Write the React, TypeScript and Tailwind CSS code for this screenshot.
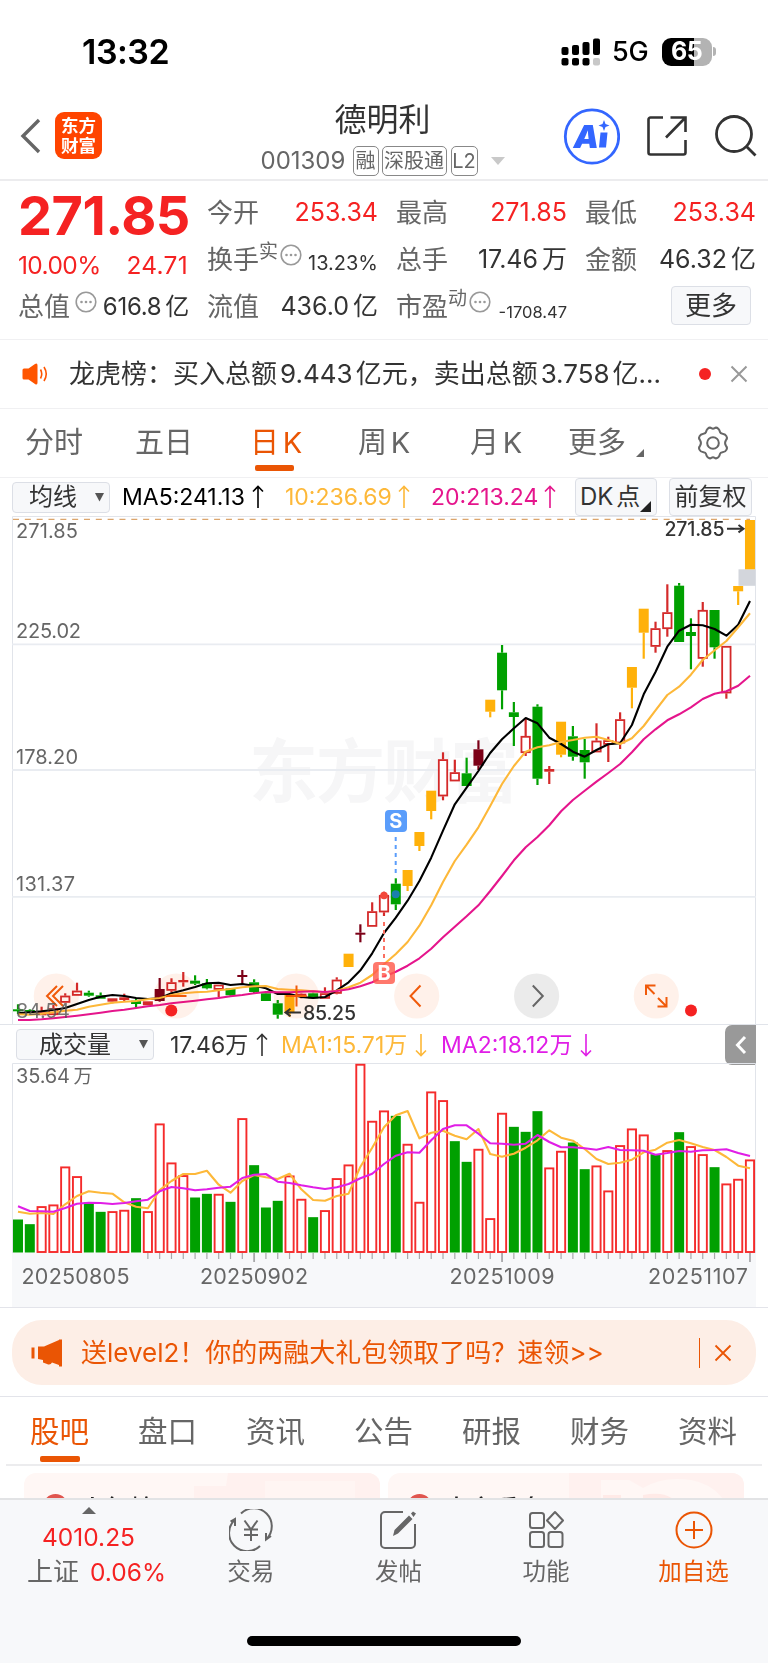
import type { ReactNode } from 'react';
import { clsx } from 'clsx';

type Kind = 'g' | 'r' | 'y' | 'd';

// kind, high, body top, body bottom, low
const CANDLES: [Kind, number, number, number, number][] = [
  ['g', 1004.3, 1009.3, 1011, 1014], ['g', 1009.3, 1010, 1011.7, 1012.7],
  ['r', 1006.7, 1012.3, 1015.3, 1015.3], ['r', 1005, 1008.3, 1015, 1015],
  ['r', 993.3, 995.7, 1002.7, 1002.7], ['r', 982.7, 990.7, 995.7, 995.7],
  ['g', 990.7, 992.7, 995.7, 996.7], ['g', 992.5, 995.3, 998.7, 998.7],
  ['r', 998.3, 998.3, 1001.7, 1003.3], ['r', 993.7, 997.3, 1000, 1001.7],
  ['g', 998.3, 1000.7, 1004, 1008.3], ['r', 1001.3, 1001.3, 1005.3, 1005.3],
  ['d', 978, 989, 1001, 1001.7], ['r', 978.3, 982.3, 990.7, 992.3],
  ['r', 972, 980, 982.3, 986.7], ['g', 975.3, 980.7, 983.7, 985],
  ['g', 979, 983.3, 988.3, 989.3], ['r', 984.7, 984.7, 989.7, 997.3],
  ['g', 988, 988.3, 995.3, 996], ['d', 970, 975, 976, 984.3],
  ['g', 979.3, 982.3, 992, 994], ['g', 992, 993.3, 1001, 1001],
  ['g', 1000, 1003.3, 1014.7, 1018.7], ['y', 995, 995, 1012.3, 1016.7],
  ['r', 993.3, 993.7, 996.7, 998.3], ['g', 992.7, 993.3, 998.3, 998.3],
  ['r', 987.3, 993.3, 998.7, 998.7], ['r', 977.3, 979.7, 993.7, 994.3],
  ['y', 953.7, 953.7, 967, 967], ['d', 924.3, 932.7, 933.7, 942.3],
  ['r', 902.3, 911.3, 926.7, 926.7], ['r', 891.7, 895, 912.3, 916],
  ['g', 878.3, 883.7, 904.3, 910], ['y', 870, 870, 886, 891],
  ['y', 832, 832, 846, 851], ['y', 790.7, 790.7, 811, 819.3],
  ['r', 752.3, 759.3, 796.3, 800.3], ['r', 759.7, 772.3, 781.3, 781.3],
  ['g', 757.7, 773.3, 786, 786], ['d', 740.3, 749.3, 765.7, 770],
  ['y', 699.7, 699.7, 711.7, 717.3], ['g', 645, 652.7, 690.3, 709.3],
  ['g', 702, 712.3, 717, 746], ['r', 718.7, 736, 753, 756],
  ['g', 704.3, 706.7, 778.7, 785], ['r', 766, 769, 771.7, 784],
  ['y', 721.7, 721.7, 754.7, 757.3], ['g', 726, 736.3, 756.7, 760.7],
  ['g', 739, 750, 762.3, 778.7], ['r', 723.3, 740.7, 752.3, 752.3],
  ['r', 736.7, 740.3, 744.7, 762], ['r', 712.3, 719.3, 743.3, 749],
  ['y', 667, 667, 687.7, 708.3], ['y', 608.7, 608.7, 632.7, 658.7],
  ['r', 621.7, 628.3, 646.7, 652.7], ['r', 584.3, 612.3, 629, 636.7],
  ['g', 583, 585.7, 642, 642], ['g', 618.3, 632, 636, 669.3],
  ['r', 602, 610, 658.7, 666.7], ['g', 610, 610, 647.3, 658.7],
  ['r', 646, 646, 693.3, 698.7], ['y', 586, 586, 591.3, 605],
  ['y', 520, 520, 569.3, 569.3],
];

const MA5 = [
  1013.3, 1012.3, 1011.3, 1010, 1008, 1004, 1000, 996.7, 995, 996, 998, 999, 998.3, 993.3, 990.3, 987, 983.3,
  982.7, 985, 984, 985.7, 988.3, 994, 994, 997, 998, 997, 990.3, 982.3, 970.3, 953.3, 933, 917.7, 900.7, 881,
  857.7, 830.7, 804.3, 787.7, 771, 753, 739.3, 728.3, 718, 723.3, 737.7, 744, 751.7, 756.7, 750, 744.3, 743.3,
  725, 694.3, 672, 646.7, 630.7, 624.7, 625.3, 629, 635.7, 624.7, 601,
];

const MA10 = [
  1014.3, 1014.7, 1013.7, 1012.3, 1010.7, 1009.7, 1006.7, 1004.7, 1002.7, 1001.7, 1001, 999.3, 998, 995, 993.3,
  992.3, 991.7, 990.3, 989, 987.3, 986.3, 986, 989, 989.7, 990.3, 991.3, 992.3, 990.7, 987.3, 982.7, 975, 964.3,
  954, 942, 925.7, 905.3, 882, 861, 844.7, 827.3, 806, 784, 766, 751.7, 747.3, 745.3, 742, 740, 737.7, 736.7,
  740, 744, 738.3, 726, 710.3, 695, 686.7, 674.7, 660, 650.3, 641, 627.3, 613.3,
];

const MA20 = [
  1020, 1020, 1019.3, 1018.3, 1017, 1015.7, 1014.3, 1012.7, 1011, 1009.7, 1008, 1006.3, 1005, 1003.3, 1002,
  1000.7, 999.3, 998, 996.3, 995, 993.3, 992, 992.3, 992.3, 991.7, 991.3, 992, 991, 989.3, 986.3, 982.3, 976.7,
  971.7, 965.7, 958.3, 948.7, 937.3, 926.7, 916.3, 905.3, 891, 876, 860.3, 847.3, 837, 825.3, 811.3, 800,
  790.7, 781.7, 773, 764, 752.3, 739.3, 729.3, 720.3, 714.3, 707.3, 699, 693.7, 691.3, 685.7, 675.7,
];

// bar tops, in thirds of a pixel below y = 1050
const VOLUMES = [
  510, 524, 470, 465, 351, 380, 459, 487, 485, 481, 446, 485, 222, 339, 377, 444, 433, 433, 457, 206, 347, 474,
  454, 378, 448, 503, 482, 386, 345, 43, 214, 183, 199, 283, 457, 126, 152, 275, 337, 298, 506, 190, 232, 247,
  185, 354, 304, 279, 359, 348, 423, 287, 237, 255, 314, 302, 248, 290, 314, 353, 402, 388, 330,
];

const FALLING = new Set([0, 1, 6, 7, 10, 15, 16, 18, 20, 21, 22, 25, 32, 37, 38, 42, 43, 44, 47, 48, 54, 56, 59]);

const VMA1 = [
  485, 491, 489, 492, 463, 438, 424, 428, 431, 457, 470, 475, 420, 393, 372, 372, 362, 404, 428, 393, 375, 382,
  387, 371, 418, 450, 452, 438, 431, 350, 293, 232, 196, 183, 265, 248, 242, 257, 268, 237, 312, 320, 311, 293,
  271, 241, 263, 272, 297, 327, 342, 338, 329, 307, 299, 278, 270, 280, 291, 300, 321, 347, 355,
];

const VMA2 = [
  469, 483, 484, 485, 474, 461, 458, 459, 462, 459, 454, 449, 424, 411, 415, 421, 418, 413, 410, 384, 374, 372,
  395, 399, 406, 412, 417, 412, 402, 385, 371, 342, 317, 307, 308, 271, 237, 226, 226, 251, 280, 281, 284, 281,
  255, 276, 292, 292, 295, 299, 291, 300, 301, 302, 314, 309, 303, 305, 301, 300, 298, 309, 318,
];

const COLORS: Record<Kind, string> = { g: '#00a000', r: '#d42a2a', y: '#ffb10a', d: '#7c0017' };

const xAt = (i: number) => 18 + i * 11.806;
const vy = (v: number) => 1050 + v / 3;
const line = (ys: number[]) => ys.map((y, i) => `${xAt(i).toFixed(1)},${y.toFixed(1)}`).join(' ');

function Candle({ i, kind, hi, top, bottom, lo }: { i: number; kind: Kind; hi: number; top: number; bottom: number; lo: number }) {
  const x = xAt(i);
  const color = COLORS[kind];
  const hollow = kind === 'r' && bottom - top > 4;
  return (
    <g>
      {hi < top && <line x1={x} x2={x} y1={hi} y2={top} stroke={color} strokeWidth={2.2} />}
      {lo > bottom && <line x1={x} x2={x} y1={bottom} y2={lo} stroke={color} strokeWidth={2.2} />}
      {hollow ? (
        <rect x={x - 4.2} y={top + 0.8} width={8.4} height={bottom - top - 1.6} fill="#fff" stroke={color} strokeWidth={1.8} />
      ) : (
        <rect x={x - 5} y={top} width={10} height={Math.max(bottom - top, 2)} fill={color} />
      )}
    </g>
  );
}

function PriceChart() {
  return (
    <svg width="768" height="508" viewBox="0 516 768 508" className="block" fontFamily='Inter, "Noto Sans CJK SC", sans-serif'>
      <text x="249" y="797" fontSize="69" fontWeight="700" fill="#f6f6f7" textLength="270">
        东方财富
      </text>
      <path d="M12.5 1024V516.5H755.5V1024" fill="none" stroke="#e1e4ea" />
      {[644.3, 770, 896.8].map((y) => (
        <line key={y} x1="12" x2="756" y1={y} y2={y} stroke="#e9ecf1" strokeWidth="1.8" />
      ))}
      <line x1="13" x2="750" y1="519.4" y2="519.4" stroke="#dba56c" strokeWidth="1.4" strokeDasharray="6 5.83" />
      <g fontSize="20" fill="#666">
        <text x="16" y="538" textLength="62">271.85</text>
        <text x="16" y="637.5" textLength="65">225.02</text>
        <text x="16" y="764.3" textLength="62">178.20</text>
        <text x="16" y="891" textLength="59">131.37</text>
      </g>
      <rect x="738.5" y="569.3" width="17" height="16.5" fill="#d3d6dc" />
      {CANDLES.map(([kind, hi, top, bottom, lo], i) => (
        <Candle key={i} i={i} kind={kind} hi={hi} top={top} bottom={bottom} lo={lo} />
      ))}
      <g fill="none" strokeWidth="2.1" strokeLinejoin="round">
        <polyline points={line(MA5)} stroke="#000" />
        <polyline points={line(MA10)} stroke="#fdb839" />
        <polyline points={line(MA20)} stroke="#e5158c" />
      </g>

      <line x1="395.7" x2="395.7" y1="837" y2="873" stroke="#5a9dfb" strokeWidth="2" strokeDasharray="4 4" />
      <rect x="385" y="810" width="22" height="22" rx="4" fill="#5a9dfb" />
      <text x="395.9" y="828" fontSize="20" fontWeight="700" fill="#fff" textAnchor="middle">S</text>
      <circle cx="395.7" cy="894.3" r="4" fill="#1a7fae" />
      <line x1="384" x2="384" y1="922" y2="959" stroke="#fa6f61" strokeWidth="2" strokeDasharray="4 4" />
      <circle cx="384" cy="895.5" r="3.8" fill="#f3483b" />
      <rect x="373" y="962" width="22" height="22" rx="4" fill="#ff5a4c" fillOpacity="0.82" />
      <text x="384" y="980" fontSize="20" fontWeight="700" fill="#fff" textAnchor="middle">B</text>

      <g fontSize="19.5" fontWeight="500" fill="#333">
        <text x="664.5" y="536" textLength="60">271.85</text>
        <text x="303" y="1020" textLength="53">85.25</text>
      </g>
      <path d="M727 528.7H743M738.5 525l5 3.7-5 3.7" fill="none" stroke="#333" strokeWidth="2" />
      <path d="M301 1012.5H285M290.5 1008.8l-5 3.7 5 3.7" fill="none" stroke="#333" strokeWidth="2" />

      {[56.3, 176.3, 296.3, 416.7, 656.3].map((x) => (
        <circle key={x} cx={x} cy="996" r="22.6" fill="#fff1ea" className="mix-blend-multiply" />
      ))}
      <circle cx="536.6" cy="996" r="22.6" fill="#ebebeb" />
      <g fill="none" stroke="#f05a0a" strokeWidth="2">
        <path d="M57 986l-10 10 10 10M63 986l-10 10 10 10" />
        <path d="M166 996h20.5M286 996h20.5M296.5 985.5v21" />
        <path d="M420.5 985.5l-10 10.5 10 10.5" />
        <path d="M646 995v-9.5h9.5M646 985.5l8.5 8.5M666.5 997v9.5h-9M666.5 1006.5l-8.5-8.5" />
      </g>
      <path d="M532.8 985.5l10 10.5-10 10.5" fill="none" stroke="#666" strokeWidth="2" />
      <circle cx="171.3" cy="1010.5" r="6" fill="#f52222" />
      <circle cx="691" cy="1010.5" r="6" fill="#f52222" />
      <text x="16" y="1018" fontSize="20" fill="#555" fillOpacity="0.8" textLength="54">84.54</text>
    </svg>
  );
}

function VolumeChart() {
  return (
    <svg width="768" height="244" viewBox="0 1063 768 244" className="block" fontFamily='Inter, "Noto Sans CJK SC", sans-serif'>
      <rect x="12" y="1253" width="744" height="54" fill="#f7f8fa" />
      <path d="M12.5 1253V1063.5H755.5V1253" fill="none" stroke="#e1e4ea" />
      <text x="16" y="1083" fontSize="20" fill="#666">
        <tspan textLength="54">35.64</tspan>
        <tspan x="73.5" fontSize="19">万</tspan>
      </text>
      {VOLUMES.map((v, i) => {
        const x = xAt(i);
        const y = vy(v);
        if (FALLING.has(i)) {
          return <rect key={i} x={x - 5} y={y - 0.5} width={10} height={1253 - y} fill="#00a000" />;
        }
        return <rect key={i} x={x - 4.1} y={y + 0.4} width={8.2} height={1251.6 - y} fill="#fff" stroke="#f52b2b" strokeWidth={1.9} />;
      })}
      {VOLUMES.map((_, i) => {
        if (i < 11) return null;
        const major = i === 20 || i === 41 || i === 62;
        return (
          <line key={i} x1={xAt(i)} x2={xAt(i)} y1="1253" y2={major ? 1262 : 1259} stroke="#a8a8aa" strokeWidth={major ? 1.8 : 1.2} />
        );
      })}
      <g fill="none" strokeWidth="2.1" strokeLinejoin="round">
        <polyline points={line(VMA1.map(vy))} stroke="#fdb839" />
        <polyline points={line(VMA2.map(vy))} stroke="#e01ee6" />
      </g>
      <g fontSize="21.5" fill="#666">
        <text x="21.5" y="1284" textLength="108">20250805</text>
        <text x="200" y="1284" textLength="108">20250902</text>
        <text x="449.5" y="1284" textLength="105">20251009</text>
        <text x="648" y="1284" textLength="100">20251107</text>
      </g>
    </svg>
  );
}

function StatusBar() {
  return (
    <div className="flex h-[96px] items-center justify-between pt-[7px] pr-[52px] pl-[82px]">
      <span className="text-[34px] leading-none font-semibold tracking-[-0.5px] text-black">13:32</span>
      <div className="flex items-center">
        <svg width="40" height="28" viewBox="0 0 40 28">
          <g fill="#000">
            <rect x="0.5" y="9" width="7" height="8" rx="2" />
            <rect x="11" y="7" width="7" height="10" rx="2" />
            <rect x="21.5" y="4" width="7" height="13" rx="2" />
            <rect x="32" y="0.5" width="7" height="16.5" rx="2" />
            <rect x="0.5" y="20" width="7" height="7.5" rx="2" />
            <rect x="11" y="20" width="7" height="7.5" rx="2" />
            <rect x="21.5" y="20" width="7" height="7.5" rx="2" />
          </g>
          <rect x="32" y="20" width="7" height="7.5" rx="2" fill="#c8c8c8" />
        </svg>
        <span className="ml-[11.5px] w-[49.5px] text-[27px] leading-none font-medium tracking-[-0.3px] text-black">5G</span>
        <span className="flex h-[28px] w-[50px] items-center justify-center rounded-[9px] bg-linear-to-r from-black from-65% to-[#b3b3b3] to-65% text-[25px] leading-none font-bold tracking-[-0.5px] text-white">
          65
        </span>
        <span className="ml-[1.5px] h-[9px] w-[3px] rounded-r-full bg-[#b3b3b3]" />
      </div>
    </div>
  );
}

function Tag({ children, className }: { children: ReactNode; className?: string }) {
  return (
    <span className={clsx('flex h-[30px] items-center justify-center rounded-[5px] border-[1.5px] border-[#888] text-[20px] leading-none whitespace-nowrap text-[#666]', className)}>
      {children}
    </span>
  );
}

function Header() {
  return (
    <header className="flex h-[85px] justify-between border-b-2 border-[#ececee] pr-[10px] pl-[20px]">
      <div className="flex w-[182px] items-start pt-[16px]">
        <svg width="22" height="48" viewBox="0 0 22 48" className="mr-[13px]">
          <path d="M19 8L3 24l16 16" fill="none" stroke="#666" strokeWidth="3.4" />
        </svg>
        <div className="flex h-[47px] w-[47px] flex-col items-center justify-center rounded-[9px] bg-[#ff4400] text-[17.5px] leading-[20px] font-bold text-white">
          <span>东方</span>
          <span>财富</span>
        </div>
      </div>
      <div className="flex flex-col items-center pt-[6px]">
        <h1 className="text-[32px] leading-[36px] font-normal text-[#333]">德明利</h1>
        <div className="mt-[8px] flex items-center text-[#666]">
          <span className="mr-[5px] w-[87px] text-[24px] leading-none">001309</span>
          <Tag className="mr-[3px] w-[26px]">融</Tag>
          <Tag className="mr-[4px] w-[65px]">深股通</Tag>
          <Tag className="w-[27px]">L2</Tag>
          <svg width="14" height="8" viewBox="0 0 14 8" className="ml-[13px]">
            <path d="M0 0h14L7 8z" fill="#c9c9c9" />
          </svg>
        </div>
      </div>
      <div className="flex items-start pt-[12px]">
        <svg width="57" height="57" viewBox="0 0 57 57">
          <circle cx="29" cy="28.5" r="26.7" fill="#fff" stroke="#3366ff" strokeWidth="2.8" />
          <text x="10.5" y="40" fontFamily="Inter" fontSize="32" fontWeight="900" fontStyle="italic" fill="#3366ff">A</text>
          <path d="M37.5 24.5h7l-1.5 15h-7z" fill="#3366ff" />
          <path d="M41 12l1.5 4 4 1.5-4 1.5-1.5 4-1.5-4-4-1.5 4-1.5z" fill="#3366ff" />
        </svg>
        <svg width="42" height="42" viewBox="0 0 42 42" className="mt-[7px] ml-[26px]">
          <path d="M17 2.5H4.5a2 2 0 0 0-2 2v33a2 2 0 0 0 2 2h33a2 2 0 0 0 2-2V25" fill="none" stroke="#333" strokeWidth="2.6" />
          <path d="M24.5 2.5h15V17M39 3L20 22.5" fill="none" stroke="#333" strokeWidth="2.6" />
        </svg>
        <svg width="44" height="44" viewBox="0 0 44 44" className="mt-[6px] ml-[26px]">
          <circle cx="20" cy="20" r="17.5" fill="none" stroke="#333" strokeWidth="2.8" />
          <path d="M32 32l9.5 9.5" stroke="#333" strokeWidth="2.8" />
        </svg>
      </div>
    </header>
  );
}

function MoreDots() {
  return (
    <svg width="22" height="22" viewBox="0 0 22 22" className="shrink-0">
      <circle cx="11" cy="11" r="9.8" fill="none" stroke="#999" strokeWidth="1.6" />
      <g fill="#999">
        <circle cx="6.5" cy="11" r="1.3" />
        <circle cx="11" cy="11" r="1.3" />
        <circle cx="15.5" cy="11" r="1.3" />
      </g>
    </svg>
  );
}

type CellProps = { label: string; sup?: string; dots?: boolean; value: string; unit?: string; red?: boolean; small?: string };

function Cell({ label, sup, dots, value, unit, red, small }: CellProps) {
  return (
    <div className="flex h-[47px] items-center whitespace-nowrap">
      <span className="-ml-px text-[26px] leading-none text-[#666]">{label}</span>
      {sup && <span className="-mt-[16px] text-[19px] leading-none text-[#666]">{sup}</span>}
      {dots && <span className={clsx('-mt-[10px]', sup ? 'ml-[2px]' : 'ml-[5px]')}><MoreDots /></span>}
      <span className={clsx('-mr-px ml-auto leading-none', small ?? 'text-[25px]', red ? 'text-[#f52222]' : 'text-[#333]')}>
        {value}
        {unit && <span className="ml-[4px]">{unit}</span>}
      </span>
    </div>
  );
}

function Quote() {
  return (
    <section className="grid h-[159px] grid-cols-4 gap-x-[20px] border-b border-[#f0f0f2] pt-[8px] pr-[13px] pl-[19px]">
      <div>
        <div className="-ml-px h-[56px] text-[54px] leading-[54px] font-bold tracking-[-0.5px] text-[#f52222]">271.85</div>
        <div className="flex h-[38px] items-center justify-between pt-[2px] text-[24.5px] leading-none text-[#f52222]">
          <span className="-ml-px tracking-[-0.6px]">10.00%</span>
          <span className="tracking-[0.3px]">24.71</span>
        </div>
        <Cell label="总值" dots value="616.8" unit="亿" small="text-[24px] tracking-[-0.3px]" />
      </div>
      <div>
        <Cell label="今开" value="253.34" red />
        <Cell label="换手" sup="实" dots value="13.23%" small="text-[20px] pt-[6px]" />
        <Cell label="流值" value="436.0" unit="亿" />
      </div>
      <div>
        <Cell label="最高" value="271.85" red />
        <Cell label="总手" value="17.46" unit="万" />
        <Cell label="市盈" sup="动" dots value="-1708.47" small="text-[16.5px] pt-[12px]" />
      </div>
      <div>
        <Cell label="最低" value="253.34" red />
        <Cell label="金额" value="46.32" unit="亿" />
        <button className="mt-[3px] mr-[4px] ml-auto flex h-[39px] w-[80px] items-center justify-center rounded-[4px] border border-[#dcdfe6] bg-[#f7f8fa] text-[26px] leading-none text-[#333]">
          更多
        </button>
      </div>
    </section>
  );
}

function News() {
  return (
    <section className="flex h-[69px] items-center border-b border-[#f0f0f2] pl-[22px]">
      <svg width="26" height="22" viewBox="0 0 26 22">
        <path d="M0.5 7q0-1.5 1.5-1.5h4.5L13 1q2.5-1.5 2.5 1.5v17q0 3-2.5 1.5l-6.5-4.5H2Q0.5 16.5 0.5 15z" fill="#ff5500" />
        <path d="M18.5 6.5q2.5 4.5 0 9M22 4q4.5 7 0 14" fill="none" stroke="#ff5500" strokeWidth="1.6" />
      </svg>
      <p className="ml-[21px] w-[600px] text-[26px] leading-none whitespace-nowrap text-[#333]">
        龙虎榜：买入总额<span className="mx-[3px]">9.443</span>亿元，卖出总额
        <span className="mx-[3px]">3.758</span>亿...
      </p>
      <span className="ml-[30px] h-[12px] w-[12px] rounded-full bg-[#f52222]" />
      <svg width="18" height="18" viewBox="0 0 18 18" className="ml-[19px]">
        <path d="M1.5 1.5l15 15M16.5 1.5l-15 15" stroke="#999" strokeWidth="2" />
      </svg>
    </section>
  );
}

const PERIODS = [
  { label: '分时', width: 'w-[57px]' },
  { label: '五日', width: 'ml-[53px] w-[57px]' },
  { label: '日 K', width: 'ml-[58px] w-[50px]', active: true },
  { label: '周 K', width: 'ml-[58px] w-[53px]' },
  { label: '月 K', width: 'ml-[59px] w-[53px]' },
  { label: '更多', width: 'ml-[45px] w-[60px]' },
];

function PeriodTabs() {
  return (
    <nav className="flex h-[69px] items-center border-b border-[#f0f0f2] pl-[25px]">
      {PERIODS.map((p) => (
        <span
          key={p.label}
          className={clsx('relative flex h-full items-center pb-px text-[29px] leading-none whitespace-nowrap [word-spacing:-4.5px]', p.width, p.active ? 'text-[#ea5504]' : 'text-[#666]')}
        >
          {p.label}
          {p.active && <span className="absolute bottom-[6px] left-[5px] h-[6px] w-[39px] rounded-[2px] bg-[#ea5504]" />}
        </span>
      ))}
      <svg width="8" height="8" viewBox="0 0 8 8" className="mt-[20px] ml-[8px]">
        <path d="M8 0v8H0z" fill="#666" />
      </svg>
      <svg width="36" height="36" viewBox="0 0 34 34" className="-mt-px ml-[51px]" fill="none" stroke="#666" strokeWidth="1.9">
        <path d="M12 3.5q2-1.8 3.5-.5 1.5 1 3 0 1.5-1.3 3.5.5 1.5 1.5 1.5 3 .5 1.5 2.5 1.7 2.8.3 3.8 2.5 1 2-.5 3.5-1.8 2.8 0 5.6 1.5 1.5.5 3.5-1 2.2-3.8 2.5-2 .2-2.5 1.7 0 1.5-1.5 3-2 1.8-3.5.5-1.5-1-3 0-1.5 1.3-3.5-.5-1.5-1.5-1.5-3-.5-1.5-2.5-1.7-2.8-.3-3.8-2.5-1-2 .5-3.5 1.8-2.8 0-5.6-1.5-1.5-.5-3.5 1-2.2 3.8-2.5 2-.2 2.5-1.7 0-1.5 1.5-3z" />
        <circle cx="17" cy="17" r="5.5" />
      </svg>
    </nav>
  );
}

function Arrow({ down, className }: { down?: boolean; className?: string }) {
  return (
    <svg width="12" height="24" viewBox="0 0 12 24" fill="none" stroke="currentColor" strokeWidth="1.6" className={clsx('shrink-0', className)}>
      <path d={down ? 'M6 1v21.5M1 17.5l5 5 5-5' : 'M6 23V1.5M1 6.5l5-5 5 5'} />
    </svg>
  );
}

const CHIP = 'flex items-center rounded-[4px] border border-[#dcdfe6] bg-[#f7f8fa] text-[#333]';

function MaRow() {
  return (
    <div className="flex h-[38px] items-center pl-[12px] text-[23px] leading-none whitespace-nowrap">
      <div className={clsx(CHIP, 'h-[31px] w-[98px] justify-between pr-[5px] pl-[16px] text-[24px]')}>
        均线
        <svg width="9" height="9" viewBox="0 0 9 9">
          <path d="M0 0h9L4.5 8.5z" fill="#555" />
        </svg>
      </div>
      <span className="ml-[12px] w-[130px] pt-px text-black">MA5:241.13</span>
      <Arrow className="text-black" />
      <span className="ml-[21px] w-[113px] pt-px text-[#fdb839]">10:236.69</span>
      <Arrow className="text-[#fdb839]" />
      <span className="ml-[21px] w-[113px] pt-px text-[#e5158c]">20:213.24</span>
      <Arrow className="text-[#e5158c]" />
      <div className={clsx(CHIP, 'relative ml-[19px] h-[38px] w-[82px] pl-[4px] text-[24px] [word-spacing:-4px]')}>
        DK 点
        <svg width="11" height="11" viewBox="0 0 11 11" className="absolute right-[5px] bottom-[3px]">
          <path d="M11 0v11H0z" fill="#222" />
        </svg>
      </div>
      <div className={clsx(CHIP, 'ml-[12px] h-[38px] w-[83px] justify-center text-[24px]')}>前复权</div>
    </div>
  );
}

function VolumeRow() {
  return (
    <div className="flex h-[39px] items-center border-t border-[#e1e4ea] pt-px pl-[16px] text-[24px] leading-none whitespace-nowrap">
      <div className={clsx(CHIP, 'h-[31px] w-[138px] justify-between pr-[5px] pl-[22px]')}>
        成交量
        <svg width="9" height="9" viewBox="0 0 9 9">
          <path d="M0 0h9L4.5 8.5z" fill="#555" />
        </svg>
      </div>
      <span className="ml-[16px] w-[86px] pt-px text-[23px] text-[#333]">17.46万</span>
      <Arrow className="text-[#333]" />
      <span className="ml-[13px] w-[134px] pt-px text-[23px] text-[#fdb839]">MA1:15.71万</span>
      <Arrow down className="text-[#fdb839]" />
      <span className="ml-[14px] w-[139px] pt-px text-[23px] text-[#e01ee6]">MA2:18.12万</span>
      <Arrow down className="text-[#e01ee6]" />
      <button className="mr-[12px] ml-auto flex h-[40px] w-[31px] items-center justify-center rounded-l-[7px] bg-[#999]">
        <svg width="12" height="20" viewBox="0 0 12 20">
          <path d="M10 2L2.5 10l7.5 8" fill="none" stroke="#fff" strokeWidth="3" />
        </svg>
      </button>
    </div>
  );
}

function Promo() {
  return (
    <section className="border-y border-[#e3e4ea] px-[12px] pt-[12px] pb-[11px]">
      <div className="flex h-[65px] items-center rounded-[30px] bg-[#fdeee6] pr-[24px] pl-[19px] text-[#ea5504]">
        <svg width="32" height="28" viewBox="0 0 32 28" fill="currentColor">
          <path d="M0.5 8.5h3v11h-3zM7 7.5h6L28 1V0.5h3v27h-3V26l-7-2.5q-1.5 3-5 1.5l-4-1.5V21L7 20z" />
        </svg>
        <span className="ml-[18px] text-[26px] leading-none whitespace-nowrap">送level2！你的两融大礼包领取了吗？速领&gt;&gt;</span>
        <span className="ml-auto h-[30px] w-[1.5px] bg-[#ea5504]" />
        <svg width="18" height="18" viewBox="0 0 18 18" className="ml-[14px]">
          <path d="M1.5 1.5l15 15M16.5 1.5l-15 15" stroke="#ea5504" strokeWidth="1.8" />
        </svg>
      </div>
    </section>
  );
}

const TABS = ['股吧', '盘口', '资讯', '公告', '研报', '财务', '资料'];

function InfoTabs() {
  return (
    <nav className="mx-[6px] flex h-[69px] justify-between border-b-2 border-[#ececee] pr-[25px] pl-[24px]">
      {TABS.map((t, i) => (
        <span key={t} className={clsx('relative pt-[19px] text-[29.5px] leading-[30px]', i === 0 ? 'text-[#ea5504]' : 'text-[#666]')}>
          {t}
          {i === 0 && <span className="absolute top-[59px] left-[10px] h-[6px] w-[40px] rounded-[2px] bg-[#ea5504]" />}
        </span>
      ))}
    </nav>
  );
}

function Card({ title, children }: { title: string; children: ReactNode }) {
  return (
    <div className="relative flex h-[64px] w-[356px] shrink-0 items-center overflow-hidden rounded-[12px] bg-[#fff7f5] pl-[19px]">
      <svg width="356" height="64" viewBox="0 0 356 64" className="absolute inset-0">
        {children}
      </svg>
      <span className="relative mt-[2px] h-[25px] w-[25px] rounded-full bg-[#e0554e]" />
      <span className="relative mt-[9px] ml-[12px] text-[25px] leading-none font-medium text-[#222]">{title}</span>
    </div>
  );
}

function Cards() {
  return (
    <div className="flex h-[32px] gap-[8px] overflow-hidden px-[24px] pt-[7px]">
      <Card title="人气榜">
        <path d="M204 0h152v64H170V13h32z" fill="#fff1ef" />
        <path d="M241 8h90v56h-90z" fill="#fff5f3" />
      </Card>
      <Card title="大家看盘">
        <path d="M181 0h175v64H181z" fill="#fff1ef" />
        <path d="M213 64V7h28l14 8q20-12 48-8 28 5 38 30v27z" fill="#fff7f5" />
        <path d="M215 22h18v42h-18zM255 22q20-4 30 4v38h-30z" fill="#ffeae7" />
      </Card>
    </div>
  );
}

function TabItem({ label, active, children }: { label: string; active?: boolean; children: ReactNode }) {
  return (
    <div className={clsx('flex w-[147.6px] flex-col items-center pt-[9px]', active ? 'text-[#ea5504]' : 'text-[#666]')}>
      <svg width="44" height="42" viewBox="0 0 44 42" fill="none" stroke="currentColor" strokeWidth="2">
        {children}
      </svg>
      <span className="mt-[9px] text-[23.5px] leading-[24px]">{label}</span>
    </div>
  );
}

function BottomBar() {
  return (
    <footer className="relative flex h-[166px] border-t-2 border-[#e2e3e5] bg-[#f7f8fa]">
      <div className="flex w-[177px] flex-col items-center pt-[7px]">
        <svg width="14" height="7" viewBox="0 0 14 7">
          <path d="M0 7L7 0l7 7z" fill="#666" />
        </svg>
        <span className="mt-[11px] text-[24.5px] leading-[24px] text-[#f52222]">4010.25</span>
        <div className="mt-[10px] flex items-center gap-[11px] pl-[16px] text-[24.5px] leading-[26px]">
          <span className="text-[26px] text-[#666]">上证</span>
          <span className="text-[#f52222]">0.06%</span>
        </div>
      </div>
      <TabItem label="交易">
        <path d="M12 4.5A18 18 0 0 1 37.5 30M31 37A18 18 0 0 1 5.5 11M1.5 12.5l4.5-2.5v7M42 27l-5 3.5V24" />
        <path d="M15.5 11.5l6.5 9 6.5-9M22 20.5v11.5M15 20.5h14M15 26h14" />
      </TabItem>
      <TabItem label="发帖">
        <path d="M27 3H9a4 4 0 0 0-4 4v28a4 4 0 0 0 4 4h26a4 4 0 0 0 4-4V15" />
        <path d="M17 27l1.5-6L33 6.5l3.5 3.5L22 24.5zM35 4.5l2-2 3 2-2.5 3.5z" fill="currentColor" stroke="none" />
      </TabItem>
      <TabItem label="功能">
        <rect x="6" y="4" width="14" height="15" rx="2.5" />
        <path d="M31 3l8 8.5-8 8.5-8-8.5z" strokeLinejoin="round" />
        <rect x="6" y="23" width="14" height="15" rx="2.5" />
        <rect x="24.5" y="23" width="14" height="15" rx="2.5" />
      </TabItem>
      <TabItem label="加自选" active>
        <circle cx="22" cy="21" r="17.5" />
        <path d="M22 12v18M13 21h18" />
      </TabItem>
      <span className="absolute bottom-[18px] left-[247px] h-[10px] w-[274px] rounded-full bg-black" />
    </footer>
  );
}

export default function App() {
  return (
    <div className="h-[1663px] w-[768px] overflow-hidden bg-white font-[Inter,'Noto_Sans_CJK_SC',sans-serif]">
      <StatusBar />
      <Header />
      <Quote />
      <News />
      <PeriodTabs />
      <MaRow />
      <PriceChart />
      <VolumeRow />
      <VolumeChart />
      <Promo />
      <InfoTabs />
      <Cards />
      <BottomBar />
    </div>
  );
}
